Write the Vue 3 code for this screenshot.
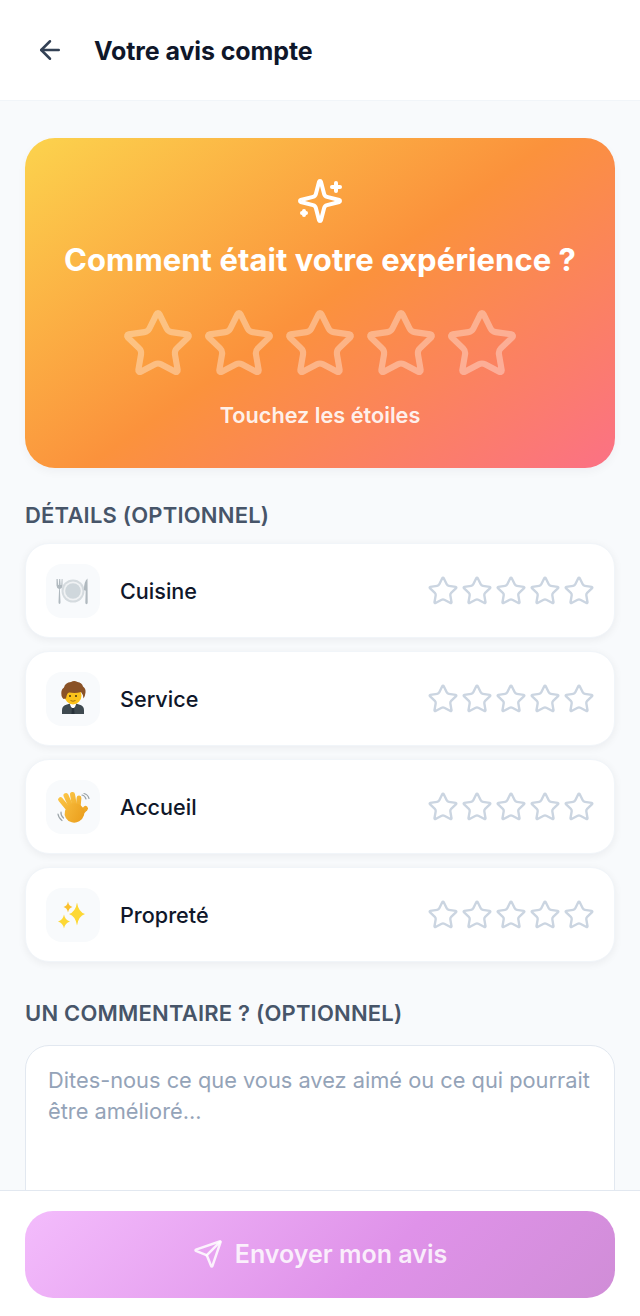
<script setup>
const star = 'M11.525 2.295a.53.53 0 0 1 .95 0l2.31 4.679a2.123 2.123 0 0 0 1.595 1.16l5.166.756a.53.53 0 0 1 .294.904l-3.736 3.638a2.123 2.123 0 0 0-.611 1.878l.882 5.14a.53.53 0 0 1-.771.56l-4.618-2.428a2.122 2.122 0 0 0-1.973 0L6.396 21.01a.53.53 0 0 1-.77-.56l.881-5.139a2.122 2.122 0 0 0-.611-1.879L2.16 9.795a.53.53 0 0 1 .294-.906l5.165-.755a2.122 2.122 0 0 0 1.597-1.16z'
const rows = [
  { label: 'Cuisine', kind: 'plate' },
  { label: 'Service', kind: 'person' },
  { label: 'Accueil', kind: 'hand' },
  { label: 'Propreté', kind: 'sparkles' }
]
const sp = (x, y, rx, ry) => `M${x} ${y - ry}Q${x + rx * 0.18} ${y - ry * 0.18} ${x + rx} ${y}Q${x + rx * 0.18} ${y + ry * 0.18} ${x} ${y + ry}Q${x - rx * 0.18} ${y + ry * 0.18} ${x - rx} ${y}Q${x - rx * 0.18} ${y - ry * 0.18} ${x} ${y - ry}Z`
</script>

<template>
  <div class="page">
    <header class="header">
      <svg class="line back" viewBox="0 0 24 24"><path d="m12 19-7-7 7-7" /><path d="M19 12H5" /></svg>
      <h1>Votre avis compte</h1>
    </header>
    <main class="main">
      <section class="hero">
        <svg class="line sparkle" viewBox="0 0 24 24">
          <path d="M9.937 15.5A2 2 0 0 0 8.5 14.063l-6.135-1.582a.5.5 0 0 1 0-.962L8.5 9.936A2 2 0 0 0 9.937 8.5l1.582-6.135a.5.5 0 0 1 .963 0L14.063 8.5A2 2 0 0 0 15.5 9.937l6.135 1.581a.5.5 0 0 1 0 .964L15.5 14.063a2 2 0 0 0-1.437 1.437l-1.582 6.135a.5.5 0 0 1-.963 0z" />
          <path d="M20 3v4" /><path d="M22 5h-4" /><path d="M4 17v2" /><path d="M5 18H3" />
        </svg>
        <h2>Comment était votre expérience ?</h2>
        <div class="big-stars">
          <svg v-for="n in 5" :key="n" class="line" viewBox="0 0 24 24"><path :d="star" /></svg>
        </div>
        <p>Touchez les étoiles</p>
      </section>

      <h3 class="section-title">Détails (optionnel)</h3>
      <div class="rows">
        <div v-for="r in rows" :key="r.label" class="row">
          <svg class="emoji" viewBox="0 0 54 54">
            <template v-if="r.kind === 'plate'">
              <circle cx="27" cy="27" r="11.5" fill="#d5dbdf" />
              <circle cx="27" cy="27" r="9.5" fill="#f0f2f4" />
              <circle cx="27" cy="27" r="7.8" fill="#cfd7dc" />
              <path d="M10.5 15v6.5q0 2.5 2.6 3.4l-.6 13.3q0 1.8 1 1.8t1-1.8l-.6-13.3q2.6-.9 2.6-3.4V15l-.8 0-.4 6h-.7l-.4-6h-1l-.4 6h-.7l-.4-6z" fill="#b0b9bf" />
              <path d="M41.5 14.5q-3.6 3-3.6 11.5l1.8.8-.4 11.6q0 1.8 1.2 1.8t1.2-1.8z" fill="#b0b9bf" />
            </template>
            <template v-else-if="r.kind === 'person'">
              <path d="M16 42v-4q0-4.600 5-5.600l3-.9h6l3 .9q5 1 5 5.600v4z" fill="#3f4a50" />
              <path d="M23.500 31h7l-1.500 4-2 1.500-2-1.500z" fill="#fff" />
              <path d="M26 36h2l.6 6h-3.200z" fill="#28323a" />
              <ellipse cx="27" cy="23.500" rx="8.500" ry="9" fill="#fcc21b" />
              <circle cx="24" cy="24" r="1" fill="#4a3510" />
              <circle cx="30" cy="24" r="1" fill="#4a3510" />
              <path d="M24.500 28.500q2.500 1.500 5 0" stroke="#8a5a10" stroke-width=".8" fill="none" />
              <path d="M17.500 27q-3-3-2-8 .5-2.500 2.500-3.500 1-5 7-5.500 3-2 6.500 0 4.500.5 5.500 4.500 3 2 2.500 6-.3 3.500-2 6-.5-4.500-2.500-6.500-5.500 1.500-11.500.5-2.500-.5-3.500 6z" fill="#8a5227" />
            </template>
            <template v-else-if="r.kind === 'hand'">
              <defs>
                <linearGradient id="handFill" x1="14" y1="14" x2="34" y2="42" gradientUnits="userSpaceOnUse">
                  <stop offset="0" stop-color="#fcc748" />
                  <stop offset="1" stop-color="#eb9f1e" />
                </linearGradient>
              </defs>
              <g stroke="url(#handFill)" stroke-linecap="round" fill="none">
                <path d="M24 31 14.500 19.500" stroke-width="4.800" />
                <path d="M26 29 20 15.500" stroke-width="5" />
                <path d="M29 29 26.500 14.500" stroke-width="5" />
                <path d="M32 29 33 18" stroke-width="4.800" />
                <path d="M33 35 39.500 28.500" stroke-width="5" />
              </g>
              <ellipse cx="28.500" cy="33" rx="10" ry="9.500" fill="url(#handFill)" transform="rotate(-30 28.500 33)" />
              <g stroke="#9aa3a8" stroke-width="1.200" stroke-linecap="round" fill="none">
                <path d="M36 15q3 .5 4 4" /><path d="M38 13.500q4 1 5 5" />
                <path d="M15 32q-.5 3 2.500 6" /><path d="M12 34q.5 4 4 6.500" />
              </g>
            </template>
            <template v-else>
              <path :d="sp(31, 26, 8, 11.500)" fill="#fdd835" />
              <path :d="sp(18, 33.500, 6, 7)" fill="#fdd835" />
              <path :d="sp(22, 19, 4.500, 5.500)" fill="#fbc02d" />
            </template>
          </svg>
          <span class="label">{{ r.label }}</span>
          <div class="small-stars">
            <svg v-for="n in 5" :key="n" class="line" viewBox="0 0 24 24"><path :d="star" /></svg>
          </div>
        </div>
      </div>

      <h3 class="section-title second">Un commentaire ? (optionnel)</h3>
      <div class="textarea">Dites-nous ce que vous avez aimé ou ce qui pourrait être amélioré...</div>
    </main>
    <footer class="footer">
      <button class="send">
        <svg class="line" viewBox="0 0 24 24"><path d="M14.536 21.686a.5.5 0 0 0 .937-.024l6.5-19a.496.496 0 0 0-.635-.635l-19 6.5a.5.5 0 0 0-.024.937l7.93 3.18a2 2 0 0 1 1.112 1.11z" /><path d="m21.854 2.147-10.94 10.939" /></svg>
        Envoyer mon avis
      </button>
    </footer>
  </div>
</template>

<style scoped>
.page {
  width: 640px;
  height: 1316px;
  display: flex;
  flex-direction: column;
  overflow: hidden;
  background: #f8fafc;
  font-family: Inter, "Noto Sans", sans-serif;
}
.line { fill: none; stroke: currentColor; stroke-width: 2; stroke-linecap: round; stroke-linejoin: round; display: block; }
.header {
  height: 100px;
  flex: none;
  box-sizing: content-box;
  display: flex;
  align-items: center;
  padding-left: 35px;
  gap: 29px;
  background: #fff;
  border-bottom: 1px solid #f1f5f9;
}
.back { width: 30px; height: 30px; color: #334155; }
h1 { margin: 2px 0 0; font-size: 25px; font-weight: 700; color: #0f172a; letter-spacing: -0.1px; }
.main { flex: 1; min-height: 0; overflow: hidden; padding: 37px 25px 0; }
.hero {
  height: 330px;
  box-sizing: border-box;
  padding-top: 39px;
  border-radius: 30px;
  background: linear-gradient(145deg, #fcd34d 0%, #fb923c 50%, #fb7185 100%);
  display: flex;
  flex-direction: column;
  align-items: center;
  color: #fff;
  box-shadow: 0 4px 10px rgba(15, 23, 42, .04);
}
.sparkle { width: 48px; height: 48px; }
h2 { margin: 15px 0 0; font-size: 31px; line-height: 40px; font-weight: 700; letter-spacing: .05px; }
.big-stars { display: flex; gap: 7px; margin-top: 27px; color: rgba(255, 255, 255, .35); }
.big-stars svg { width: 74px; height: 74px; }
.hero p { margin: 20px 0 0; font-size: 21.7px; line-height: 28px; font-weight: 600; color: rgba(255, 255, 255, .9); }
.section-title {
  margin: 32px 0 13px;
  font-size: 22px;
  line-height: 30px;
  font-weight: 600;
  letter-spacing: .2px;
  color: #475569;
  text-transform: uppercase;
}
.section-title.second { margin: 36px 0 17px; }
.rows { display: flex; flex-direction: column; gap: 13px; }
.row {
  height: 95px;
  box-sizing: border-box;
  display: flex;
  align-items: center;
  padding: 0 19px 0 20px;
  background: #fff;
  border: 1px solid #f1f5f9;
  border-radius: 24px;
  box-shadow: 0 2px 8px rgba(15, 23, 42, .06);
}
.emoji {
  width: 54px;
  height: 54px;
  flex: none;
  display: block;
  border-radius: 16px;
  background: #f8fafc;
}
.label { margin-left: 20px; flex: 1; font-size: 21.6px; font-weight: 500; color: #0f172a; }
.small-stars { display: flex; gap: 2px; color: #cbd5e1; }
.small-stars svg { width: 32px; height: 32px; stroke-width: 1.8; }
.textarea {
  height: 220px;
  box-sizing: border-box;
  padding: 19px 22px;
  background: #fff;
  border: 1px solid #e2e8f0;
  border-radius: 24px;
  color: #94a3b8;
  font-size: 21.8px;
  line-height: 31px;
}
.footer {
  flex: none;
  height: 126px;
  box-sizing: border-box;
  padding: 20px 25px 0;
  background: #fff;
  border-top: 1px solid #e2e8f0;
}
.send {
  width: 100%;
  height: 87px;
  border: 0;
  border-radius: 28px;
  display: flex;
  align-items: center;
  justify-content: center;
  gap: 12px;
  padding: 0 0 2px;
  color: rgba(255, 255, 255, .85);
  font-family: inherit;
  font-size: 25px;
  font-weight: 600;
  background: linear-gradient(135deg, #f3bcfc, #df92e9 60%, #d08dd7);
}
.send svg { width: 30px; height: 30px; }
</style>
